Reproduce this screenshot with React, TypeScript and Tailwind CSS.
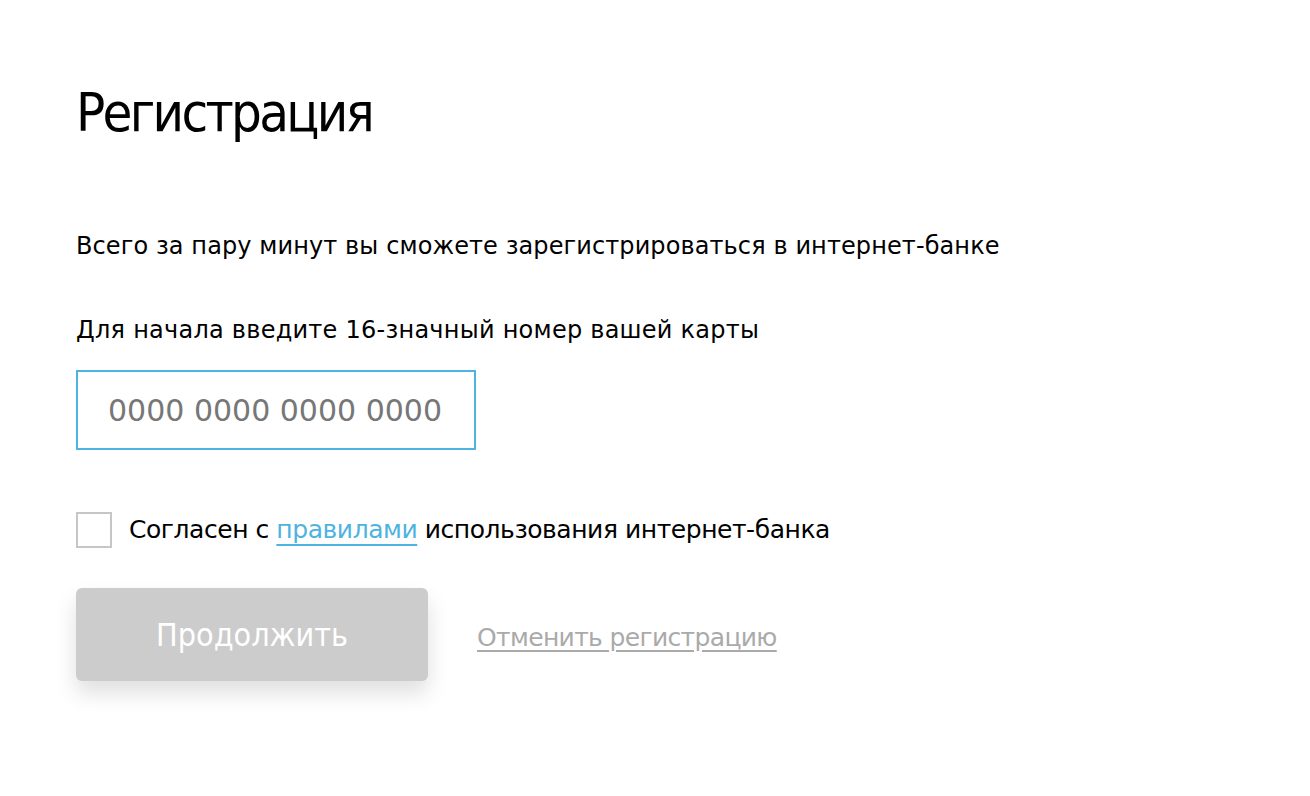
export default function App() {
  return (
    <div className="flex min-h-screen flex-col items-start bg-white pl-[76px] pt-[86px] font-['DejaVu_Sans',sans-serif] text-black">
      <h1 className="font-['DejaVu_Sans_Condensed',sans-serif] text-[54px] leading-[54px] font-normal tracking-[-2.7px]">
        Регистрация
      </h1>

      <p className="mt-[94px] text-[24px] leading-[24px] tracking-[0.1px]">
        Всего за пару минут вы сможете зарегистрироваться в интернет-банке
      </p>
      <p className="mt-[60px] text-[24px] leading-[24px] tracking-[0.25px]">
        Для начала введите 16-значный номер вашей карты
      </p>

      <input
        type="text"
        placeholder="0000 0000 0000 0000"
        className="mt-[28px] block h-[80px] w-[400px] border-2 border-[#4fb3df] bg-white pl-[30px] text-[30px] text-black outline-none placeholder:text-[#777777]"
      />

      <label className="mt-[62px] flex items-center gap-[17px]">
        <span className="block h-[36px] w-[36px] border-2 border-[#c6c6c6] bg-white" />
        <span className="text-[25px] leading-[36px] tracking-[-0.45px]">
          Согласен с{" "}
          <a href="#" className="text-[#4fb3df] underline underline-offset-[6px]">
            правилами
          </a>{" "}
          использования интернет-банка
        </span>
      </label>

      <div className="mt-[40px] flex items-center gap-[49px]">
        <button
          type="button"
          className="h-[93px] w-[352px] rounded-[6px] bg-[#cccccc] font-['DejaVu_Sans_Condensed',sans-serif] text-[32px] text-white shadow-[0_12px_22px_rgba(0,0,0,0.13)]"
        >
          Продолжить
        </button>
        <a
          href="#"
          className="mt-[6px] text-[25px] leading-[25px] tracking-[-0.65px] text-[#aaaaaa] underline underline-offset-[4px]"
        >
          Отменить регистрацию
        </a>
      </div>
    </div>
  );
}
